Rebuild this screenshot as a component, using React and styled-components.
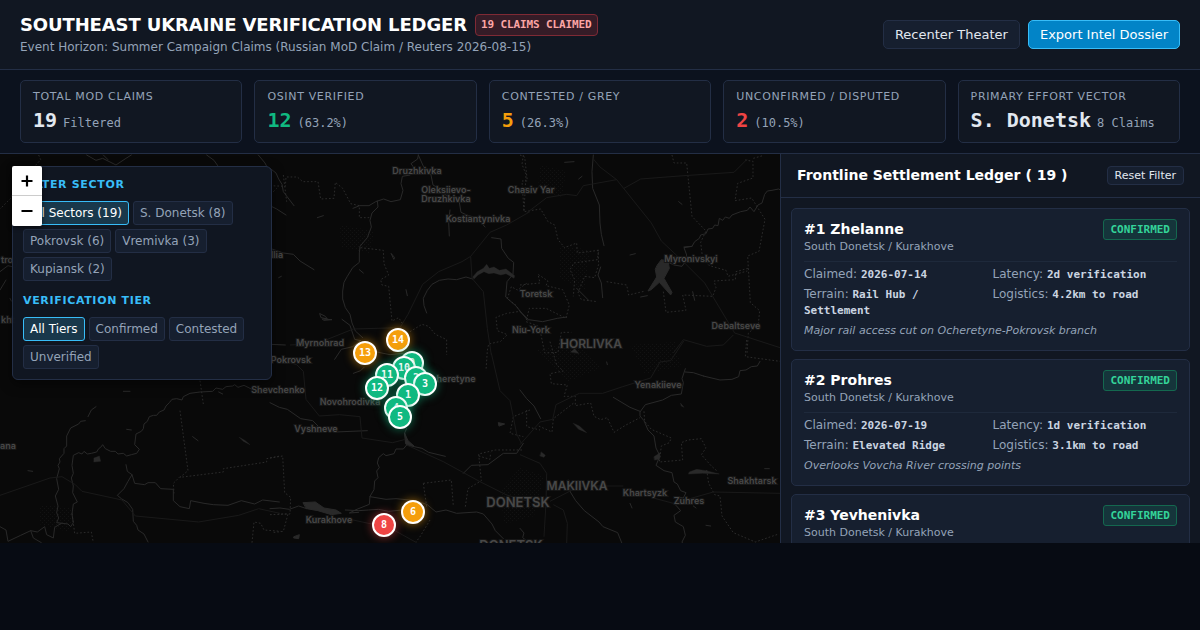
import React, { useState } from "react";
import styled, { createGlobalStyle, css } from "styled-components";

const sans = `"DejaVu Sans", sans-serif`;
const mono = `"DejaVu Sans Mono", monospace`;

const color = {
  page: "#070b13",
  band: "#0c121e",
  surface: "#111722",
  raised: "#161f2f",
  line: "#232e45",
  text: "#e2e8f0",
  soft: "#cbd5e1",
  muted: "#94a3b8",
  accent: "#38bdf8",
  green: "#10b981",
  amber: "#f59e0b",
  red: "#ef4444",
};

const GlobalStyle = createGlobalStyle`
  * { box-sizing: border-box; }
  body {
    margin: 0;
    background: ${color.page};
    color: ${color.text};
    font-family: ${sans};
    font-size: 12px;
  }
  button { font-family: inherit; cursor: pointer; }
  h1, h2, h3, p, dl, dd { margin: 0; }
`;

const Header = styled.header`
  display: flex;
  align-items: center;
  justify-content: space-between;
  gap: 16px;
  padding: 14px 20px;
  background: ${color.surface};
  border-bottom: 1px solid ${color.line};
`;

const Heading = styled.div`
  display: grid;
  gap: 3px;
`;

const TitleRow = styled.div`
  display: flex;
  align-items: center;
  gap: 8px;
  letter-spacing: -0.01em;
`;

const Title = styled.h1`
  font-size: 18px;
  line-height: 22px;
  color: #fff;
`;

const CountBadge = styled.span`
  padding: 3px 5px;
  border: 1px solid #7f2a35;
  border-radius: 4px;
  background: #351c27;
  color: #fca5a5;
  font: bold 11px/14px ${mono};
`;

const Subtitle = styled.p`
  line-height: 16px;
  color: ${color.muted};
`;

const Actions = styled.div`
  display: flex;
  gap: 8px;
`;

const ActionButton = styled.button`
  padding: 6px 11px;
  border: 1px solid ${(p) => (p.$primary ? color.accent : color.line)};
  border-radius: 5px;
  background: ${(p) => (p.$primary ? "#0284c7" : color.raised)};
  color: ${(p) => (p.$primary ? "#fff" : color.text)};
  font-size: 13px;
  line-height: 15px;
`;

const Metrics = styled.section`
  display: grid;
  grid-template-columns: repeat(5, 1fr);
  gap: 12px;
  padding: 10px 20px;
  background: ${color.band};
  border-bottom: 1px solid ${color.line};
`;

const MetricCard = styled.article`
  display: grid;
  gap: 5px;
  padding: 10px 12px;
  border: 1px solid ${color.line};
  border-radius: 5px;
  background: ${color.surface};
`;

const MetricLabel = styled.h2`
  font-size: 11px;
  font-weight: 400;
  line-height: 12px;
  letter-spacing: 0.06em;
  text-transform: uppercase;
  color: ${color.muted};
`;

const MetricValue = styled.p`
  font: bold 20px/24px ${mono};
  color: ${(p) => p.$tone || color.text};
  white-space: nowrap;
`;

const MetricNote = styled.span`
  margin-left: 6px;
  font-size: 12px;
  font-weight: 400;
  line-height: 1;
  color: ${color.muted};
`;

const Main = styled.main`
  display: grid;
  grid-template-columns: minmax(0, 1fr) 420px;
  height: calc(100vh - 241px);
  min-height: 240px;
`;

const MapPane = styled.section`
  position: relative;
  overflow: hidden;
  background: #090909;
`;

const MapDrawing = styled.svg`
  display: block;
  width: 100%;
  height: 100%;

  text {
    font-family: Inter, sans-serif;
    font-weight: 600;
    fill: #484848;
    stroke: #161616;
    stroke-width: 2px;
    paint-order: stroke;
    text-anchor: middle;
  }
`;

const Pin = styled.button`
  position: absolute;
  width: 24px;
  height: 24px;
  margin: -12px 0 0 -12px;
  padding: 0;
  border: 2px solid #fff;
  border-radius: 50%;
  background: ${(p) => p.$tone};
  box-shadow: 0 0 10px ${(p) => p.$tone}99;
  color: #fff;
  font: bold 10px/20px ${mono};
`;

const FilterPanel = styled.aside`
  position: absolute;
  top: 12px;
  left: 12px;
  display: grid;
  gap: 12px;
  width: 260px;
  padding: 10px;
  border: 1px solid ${color.line};
  border-radius: 6px;
  background: rgba(17, 23, 34, 0.96);
  box-shadow: 0 4px 12px rgba(0, 0, 0, 0.5);
`;

const FilterTitle = styled.h2`
  margin-bottom: 8px;
  font-size: 11px;
  line-height: 16px;
  letter-spacing: 0.06em;
  text-transform: uppercase;
  color: ${color.accent};
`;

const Chips = styled.div`
  display: flex;
  flex-wrap: wrap;
  gap: 4px;
`;

const Chip = styled.button`
  padding: 4px 6px;
  border: 1px solid ${color.line};
  border-radius: 3px;
  background: ${color.raised};
  color: ${color.muted};
  font-size: 12px;
  line-height: 14px;
  ${(p) =>
    p.$active &&
    css`
      border-color: ${color.accent};
      background: #19384b;
      color: #fff;
    `}
`;

const ZoomControl = styled.div`
  position: absolute;
  top: 12px;
  left: 12px;
  display: grid;
  border-radius: 2px;
  overflow: hidden;
  box-shadow: 0 1px 5px rgba(0, 0, 0, 0.65);
`;

const ZoomButton = styled.button`
  display: grid;
  place-items: center;
  width: 30px;
  height: 30px;
  padding: 0;
  border: 0;
  background: #fff;
  color: #000;

  &:first-child {
    border-bottom: 1px solid #ccc;
  }
`;

const Sidebar = styled.aside`
  display: flex;
  flex-direction: column;
  min-height: 0;
  border-left: 1px solid ${color.line};
  background: ${color.surface};
`;

const SidebarHeader = styled.header`
  display: flex;
  align-items: center;
  justify-content: space-between;
  padding: 12px 16px;
  border-bottom: 1px solid ${color.line};
`;

const SidebarTitle = styled.h2`
  font-size: 14px;
  line-height: 17px;
  color: #fff;
`;

const ResetButton = styled.button`
  padding: 2px 7px;
  border: 1px solid ${color.line};
  border-radius: 4px;
  background: ${color.raised};
  color: ${color.text};
  font-size: 11px;
  line-height: 13px;
`;

const Ledger = styled.div`
  display: flex;
  flex-direction: column;
  gap: 8px;
  padding: 10px;
  overflow-y: auto;
  scrollbar-width: none;
`;

const ClaimCard = styled.article`
  flex: none;
  padding: 10px 12px 12px;
  border: 1px solid ${color.line};
  border-radius: 5px;
  background: ${color.raised};
`;

const ClaimTop = styled.div`
  display: flex;
  align-items: flex-start;
  justify-content: space-between;
  padding-bottom: 6px;
  border-bottom: 1px solid #1e293b;
`;

const ClaimName = styled.h3`
  font-size: 14px;
  line-height: 20px;
  color: #fff;
`;

const ClaimSector = styled.p`
  font-size: 11px;
  line-height: 16px;
  color: ${color.muted};
`;

const StatusBadge = styled.span`
  padding: 3px 6px;
  border: 1px solid #14684f;
  border-radius: 3px;
  background: #15353b;
  color: #34d399;
  font: bold 11px/13px ${mono};
`;

const Facts = styled.dl`
  display: grid;
  grid-template-columns: 1fr 1fr;
  gap: 4px;
  padding-top: 4px;
  line-height: 16px;
`;

const Fact = styled.div`
  color: ${color.muted};

  dt,
  dd {
    display: inline;
  }

  dd {
    color: ${color.soft};
    font-family: ${mono};
    font-size: 11px;
    font-weight: bold;
    line-height: 1;
  }
`;

const Remark = styled.p`
  margin-top: 6px;
  font-size: 11px;
  font-style: italic;
  line-height: 14px;
  color: ${color.muted};
`;

const metrics = [
  ["Total MoD Claims", "19", "Filtered"],
  ["OSINT Verified", "12", "(63.2%)", color.green],
  ["Contested / Grey", "5", "(26.3%)", color.amber],
  ["Unconfirmed / Disputed", "2", "(10.5%)", color.red],
  ["Primary Effort Vector", "S. Donetsk", "8 Claims"],
];

const sectors = ["All Sectors (19)", "S. Donetsk (8)", "Pokrovsk (6)", "Vremivka (3)", "Kupiansk (2)"];
const tiers = ["All Tiers", "Confirmed", "Contested", "Unverified"];

const pins = [
  [14, 398, 186, color.amber],
  [13, 365, 199, color.amber],
  [9, 412, 209, color.green],
  [10, 404, 214, color.green],
  [11, 387, 221, color.green],
  [2, 416, 224, color.green],
  [3, 425, 230, color.green],
  [12, 377, 234, color.green],
  [1, 408, 241, color.green],
  [4, 396, 254, color.green],
  [5, 400, 263, color.green],
  [6, 413, 358, color.amber],
  [8, 384, 371, color.red],
];

const claims = [
  {
    name: "#1 Zhelanne",
    facts: [["Claimed", "2026-07-14"], ["Latency", "2d verification"], ["Terrain", "Rail Hub / Settlement"], ["Logistics", "4.2km to road"]],
    remark: "Major rail access cut on Ocheretyne-Pokrovsk branch",
  },
  {
    name: "#2 Prohres",
    facts: [["Claimed", "2026-07-19"], ["Latency", "1d verification"], ["Terrain", "Elevated Ridge"], ["Logistics", "3.1km to road"]],
    remark: "Overlooks Vovcha River crossing points",
  },
  {
    name: "#3 Yevhenivka",
    facts: [],
  },
];

const places = [
  ["Druzhkivka", 417, 174], ["Oleksiievo-", 446, 193], ["Druzhkivka", 446, 202],
  ["Chasiv Yar", 531, 193], ["Kostiantynivka", 478, 222], ["Myronivskyi", 691, 262],
  ["Toretsk", 536, 297], ["Debaltseve", 736, 329], ["Niu-York", 531, 333],
  ["Yenakiieve", 658, 388], ["Myrnohrad", 320, 346], ["Pokrovsk", 291, 363],
  ["Shevchenko", 278, 393], ["Novohrodivka", 350, 405], ["Vyshneve", 316, 432],
  ["Ocheretyne", 450, 382], ["Kurakhove", 329, 523], ["Khartsyzk", 645, 496],
  ["Zuhres", 689, 504], ["Shakhtarsk", 752, 484], ["ana", 8, 449],
  ["llia", 277, 258], ["tro", 7, 263], ["kht", 8, 323],
];

const cities = [
  ["HORLIVKA", 591, 348, 12], ["MAKIIVKA", 577, 490, 12],
  ["DONETSK", 518, 507, 13], ["DONETSK", 511, 550, 13],
];

function Basemap() {
  return (
    <MapDrawing viewBox="0 154 780 389" preserveAspectRatio="xMinYMin slice" aria-hidden="true">
      <defs>
        <pattern id="grain" width="4" height="4" patternUnits="userSpaceOnUse">
          <path d="M0 0h1v1h-1zM2 2h1v1h-1z" fill="#121212" />
        </pattern>
      </defs>
      <g fill="url(#grain)">
        <path d="M540 165l26 6-4 26-24-8zM560 245l30 5-5 40-26-12zM630 345l45-3 6 24-36 8zM40 505l35 3-6 24-30-8zM340 225l35 6-6 22-28-6zM500 490l20-22 24 8-10 40-30 8zM535 350l42-8 24 26-34 14z" />
      </g>
      <g fill="none" stroke="#292929" strokeWidth="3" strokeLinejoin="round" strokeLinecap="round">
        <g transform="translate(270 155) scale(.33333)">
          <path d="M445 0l-2 12-20 14 12 16-14 18-24 4-4 22 6 20-8 28-28 6-22-8-24 8-20 12-28 0-20 8M322 138l2 18-18 18-6 22 4 20-12 32-22 26-2 20 0 28-20 16-16 26-10 18-4 26 0 24 8 26 14 20 6 26 10 24 22 20M0 40l18 14 8 18 10 16 4 22 12 16 20 26M0 152l20 10 28 18M0 280l40 14 30 4 20 20 42 26M445 0l16 36 22 24 6 30 24 14 10 14 44 18 6 36 22 10 26 6 24 28" />
          <path d="M665 248l28 4 2 28 20 30 16 12-2 36-18 22-4 46 30 26 20 24 16 20M608 372l-20-6-28 8-26-2-26 4-22 12-14 18-12 24 2 22 8 22M0 568l46 2M540 165l-4 36 2 42" />
          <path d="M608 366l14-16 18-10 10-12 8 12 14-4 16 10 20-4 26 20-2 8-24-14-16 4-20-6-16 2-14-6-18 10-12 12z" fill="#292929" strokeWidth="1" />
          <path d="M150 476l16 8 6 8-18-4zM158 492l28 2-24 2zM364 296l10 12-2 4zM408 404l4 18M268 344l12 10M142 188l18-6M26 368l8-4" />
        </g>
        <g transform="translate(520 155) scale(.33333)">
          <path d="M220 0l-4 50 2 50 20 50 2 54 4 34 8 34M242 336l-8 24 10 24 4 44M440 320l22 10 24 4 10-14 4-20-8-22 24-4 8-14 14-10 4-10 16-4 6-14 14-2 6-10 10 2 4-22 10 6 8-10 12 4 8-10 26-10 20-4 8-10 12 14 12-20 12-6 8-26 8-10 14-2 20-4 10 6 20 0 4 8" />
          <path d="M412 330l12-16 20 4 4 22-16 30 24 42-4 8-34-38-24 22-10 4 26-42-4-22z" fill="#292929" />
          <path d="M0 470l26 24 42 6 44-10 28-4M134 22l28-2M176 72l10-8M330 300l16-4M476 140l10 8M492 276l24-2M518 410l6 26M362 426l20-4M170 400l36 36" />
        </g>
        <g transform="translate(270 320) scale(.33333)">
          <path d="M300 90l30 8 30 6 40-4M272 62l-18-4-14-42-24-18M272 62l-24 18-34 8-20 30M410 325l-6 14 6 36-10 12-22 0-6 14-24 6-8-6-14 12-4 16 6 14-8 10 4 20-10 10-2 26-12 20-2 24-40 16-20 10 28-2M0 248l28 14 24 6 40 28 36 6 28 28 40 6 96-4" />
          <path d="M100 548l36-2 26 18 36 6 16 10-30 4-40-12-34-6zM404 340l10 22 18 16-24-6zM72 650l16-6-2 12-14-2zM686 308l18 4-16 6z" fill="#292929" />
          <path d="M410 375l46 10 20 12 50 12M0 566l30-2 28 4 28-10 24 8M226 570l40 2 30-2 30-2 30 6 40-4 30-16M300 530l48 8 30-2 60 6 34 12 26 22 30-6 32 10 60-4 20 6 26 30 10 20 24 24M580 460l24-24 50-2 46-34 40 0 20-30M250 160l22-8 10-10" />
        </g>
        <g transform="translate(520 340) scale(.33333)">
          <path d="M496 96l24 2 30 10M496 86l-10 30 4 12-6 34-30 4-26 14-52 14-16 22 0 12 12 14 12 28 18 18 6 36 12 24-12 28 24 16 24 6 6 28 10 6 10 20 16 6-8 16-12-2-10 24 14 16-20 14 4 20 24 14 6 26-10 20 6 12 20 18M0 150l20 26 22 22 20 38M280 172l50 30 30 12M550 108l50 12 36-2 20-8 4-18 18-2 16-10 18-2 8-14M145 420l6 36 16 26 26 30 44 34 12 14 44 18 12 30M0 565l12 14-4 14 18 14" />
          <path d="M160 250l18 8 22 20-24-10zM64 336l12 10-4 6-12-4zM508 396l22-8 28 4 40 10-50-2-42 2zM402 350l18-12-2 20-14 2zM482 190l10 12-8-4zM152 36l12-10 12 14z" fill="#292929" strokeWidth="1" />
          <path d="M330 490l6 14M520 498l8 6M558 556l14 2M734 386l14 0M260 66l2 8" />
        </g>
        <g transform="translate(0 370) scale(.33333)">
          <path d="M288 110l-14 10-10 20M256 152l-14 2-6 8-24 12-12 24 0 30-8 8 0 14-14 16 2 10-6 10 4 10-8 30 6 32-10 20 8 30-4 20 6 16-6 14 34 4 8 8 8-12-4-26 4-30 12-6-14-28 2-20-6-24 6-14-4-24 4-30 16-8 10 4 6-8 10 8 12-2 16-4 6-10 6-4 6-8 8 12 16 8 14 0 8 8 16-2 10 8 14-4 16-4 8-12-14-14 4-32 16-8 6-8 2-14 10-8 6-14 12-4 10 0 8-10 14-6 6-12 10-10 8-10 14-2 16 4 4-10 20-10 30-4 38-2 10-10 20 4 10-8 20-2 6-4 10 8 18-6 24 12 10 4 14-2 16 8M378 284l4 20 14 10-12 20-12 22-20 20 12 10 20 12 14 20 2 36 10 12 4 14 18 12 12 24M396 314l8 26 30 4 10-6 22 0 16 18 38 2 0 34 20 18 28 6 4-24 40 8 28 4 44 2 40-14 40 10 24-12 50 6M0 470l18 10 6 34 38-18 30-14 20 4 22-16 6 24 20 10 4-32 20-12M92 482l8 22 24 14" />
          <path d="M282 264l16-6 4 16-20 2zM718 202l18 10 14 12-20-10z" fill="#292929" strokeWidth="1" />
          <path d="M84 302l14 2M578 200l16 12M370 64l20 0M656 66l12 6M380 178l14 2" />
        </g>
        <g transform="translate(0 155) scale(.33333)">
          <path d="M260 0l28 16 20-6 40 20 30-20 16-10M310 0l14 14M620 0l22 16 14 20M775 0l20 24 8 16M0 350l24-18 24 6 6-20-12-20 12-18M0 405l18-30M30 430l4 8" />
        </g>
      </g>
      <g fill="none" stroke="#2b2b2b" strokeWidth="3" strokeDasharray="5 6">
        <path transform="translate(270 155) scale(.33333)" d="M0 92l46 2 2-28 34 0 16 14 46 0 8 52 40-2 4-48 22 18 24 46 26 6 0 36 30 0M272 278l68 8 2 40 14 34-24 14 4 16 20 4 10 104 20-10 14 22M760 0l-4 28 12 30-6 110M770 385l-28 20-18-10-12 36 26 20 12 18-40 6-32 12 4 40 30 12-20 20-36 8-4 20-4 60M420 530l36-22 20 6 20 24 34 16 0 46" />
        <path transform="translate(520 155) scale(.33333)" d="M456 0l6 24 38 0 16 160 42 44-16 34 6 50 20 20 50 14 6 18 58-16M0 0l14 6 8 72-16 0 6 92 50-8 22 38 20 10 10 44 20 24 36-14 2 30 64-8-4 28-70 10-12 20 14 30-4 50M234 284l2 44-12 40-30-4-20 50 10 20 48 6M260 380l60 10 6 30 50-12M430 410l8 62 60-6-10-46 90 4 10-26-6-20 64-4 2-24 36-10M0 390l60-6-6-26 30 20-6 14 50 12 20 46-10 40-60-30-50 0-10 40 40 14 16 80 40-2 10-60 30 0M675 15l24 4 0 50-46 16-8 52 50-8 40 64-18 96-34 14 8 140 28 24-4 40-30 28-4 60M700 10l28-8" />
        <path transform="translate(270 320) scale(.33333)" d="M0 414l38-6 6 110 18 14-2 50-36 0M0 584l54-2-14 52-34 4M460 490l84-10 6 78M460 490l10 70M586 560l8-54 40-24-8-80 50-12 80 0M626 408l34 10 2-20M480 600l-30 50-12 16M780 270l-50 20-10 50 40 10" />
        <path transform="translate(520 340) scale(.33333)" d="M90 5l20 70 20 18-40 8 4 30 48 4-10 34 34 0 0 28 46-8 10 40 20 10 20-6 20 44 36-22 42-22M160 190l-60 46-4 40-40-18M372 214l2 30 20 24 60 26-6 14-24 10-6 48 70-6-4-52 20-8 40-4 14 28-14 20 30 34 16 14M680 0l-4 50 104 14M560 390l6 40 18 34 16 4 6 60 34 50 66 28 70-24M20 210l0 50 40 10" />
        <path transform="translate(0 370) scale(.33333)" d="M600 32l10 70M540 122l24 180-24 20 130-16 0-10 130-20 0-10 40-8M540 320l-20 20 2 30M216 430l8 60 50-4 6 32M756 518l6-62 20 4 10 20 50 4" />
        <path transform="translate(0 155) scale(.33333)" d="M116 0l6 14-60 66-20 18-8 30-34 34M820 110l10-10M850 60l10 80" />
      </g>
      <g fill="none" stroke="#191919" strokeWidth="3">
        <path transform="translate(270 155) scale(.33333)" d="M780 170l-70 40-50 22-58 72-26 16-70 30-48 38-44 90-24 40-140 4-110 44-80 4M602 304l4 66 34 40 12 110 12 80" />
        <path transform="translate(520 155) scale(.33333)" d="M220 12l20 24 50 38 104 130 30 54 64 60 66 66 90 150 136 44M20 174l60-46 60-10 30 4 20-30 100-18M312 100l50-28 130-10 150-10 40-40M640 540l-30 30-50 4-70-20-30 40" />
        <path transform="translate(270 320) scale(.33333)" d="M0 110l80 24 20 20 8 84 40 50 60-4 62 6 6 64 92 14 38-10M410 375l110 50 110 60 80 40 70 20M664 100l26 112 30 30 20 100 14 28M240 598l120 26 80 44" />
        <path transform="translate(520 340) scale(.33333)" d="M0 314l60-68 38-8 10-44 70-34 70 0 60-20 84-26 28-48 32-4 40-60M0 344l60 26 20 30-2 90-6 100M90 484l90-46 130 0M400 474l60 16 120-34 200 4M100 494l30 16 12 40-2 60" />
        <path transform="translate(0 370) scale(.33333)" d="M0 376l150-52 36-4 40 24 20 20 120 26 40 48 190 18 120-20 60-20 64 14" />
      </g>
      {places.map(([name, x, y]) => (
        <text key={name + x} x={x} y={y} fontSize="9">{name}</text>
      ))}
      {cities.map(([name, x, y, size]) => (
        <text key={name + y} x={x} y={y} fontSize={size}>{name}</text>
      ))}
    </MapDrawing>
  );
}

function FilterGroup({ title, options }) {
  const [selected, setSelected] = useState(options[0]);
  return (
    <div>
      <FilterTitle>{title}</FilterTitle>
      <Chips>
        {options.map((option) => (
          <Chip key={option} $active={option === selected} aria-pressed={option === selected} onClick={() => setSelected(option)}>
            {option}
          </Chip>
        ))}
      </Chips>
    </div>
  );
}

export default function App() {
  return (
    <>
      <GlobalStyle />
      <Header>
        <Heading>
          <TitleRow>
            <Title>SOUTHEAST UKRAINE VERIFICATION LEDGER</Title>
            <CountBadge>19 CLAIMS CLAIMED</CountBadge>
          </TitleRow>
          <Subtitle>Event Horizon: Summer Campaign Claims (Russian MoD Claim / Reuters 2026-08-15)</Subtitle>
        </Heading>
        <Actions>
          <ActionButton>Recenter Theater</ActionButton>
          <ActionButton $primary>Export Intel Dossier</ActionButton>
        </Actions>
      </Header>
      <Metrics>
        {metrics.map(([label, value, note, tone]) => (
          <MetricCard key={label}>
            <MetricLabel>{label}</MetricLabel>
            <MetricValue $tone={tone}>
              {value}
              <MetricNote>{note}</MetricNote>
            </MetricValue>
          </MetricCard>
        ))}
      </Metrics>
      <Main>
        <MapPane>
          <Basemap />
          {pins.map(([id, x, y, tone]) => (
            <Pin key={id} $tone={tone} style={{ left: x, top: y }}>{id}</Pin>
          ))}
          <FilterPanel>
            <FilterGroup title="Filter Sector" options={sectors} />
            <FilterGroup title="Verification Tier" options={tiers} />
          </FilterPanel>
          <ZoomControl>
            <ZoomButton aria-label="Zoom in">
              <svg width="14" height="14" viewBox="0 0 14 14"><path d="M7 1.5v11M1.5 7h11" stroke="currentColor" strokeWidth="2.2" /></svg>
            </ZoomButton>
            <ZoomButton aria-label="Zoom out">
              <svg width="14" height="14" viewBox="0 0 14 14"><path d="M1.5 7h11" stroke="currentColor" strokeWidth="2.2" /></svg>
            </ZoomButton>
          </ZoomControl>
        </MapPane>
        <Sidebar>
          <SidebarHeader>
            <SidebarTitle>Frontline Settlement Ledger ( 19 )</SidebarTitle>
            <ResetButton>Reset Filter</ResetButton>
          </SidebarHeader>
          <Ledger>
            {claims.map((claim) => (
              <ClaimCard key={claim.name}>
                <ClaimTop>
                  <div>
                    <ClaimName>{claim.name}</ClaimName>
                    <ClaimSector>South Donetsk / Kurakhove</ClaimSector>
                  </div>
                  <StatusBadge>CONFIRMED</StatusBadge>
                </ClaimTop>
                <Facts>
                  {claim.facts.map(([term, value]) => (
                    <Fact key={term}>
                      <dt>{term}: </dt>
                      <dd>{value}</dd>
                    </Fact>
                  ))}
                </Facts>
                {claim.remark && <Remark>{claim.remark}</Remark>}
              </ClaimCard>
            ))}
          </Ledger>
        </Sidebar>
      </Main>
    </>
  );
}
